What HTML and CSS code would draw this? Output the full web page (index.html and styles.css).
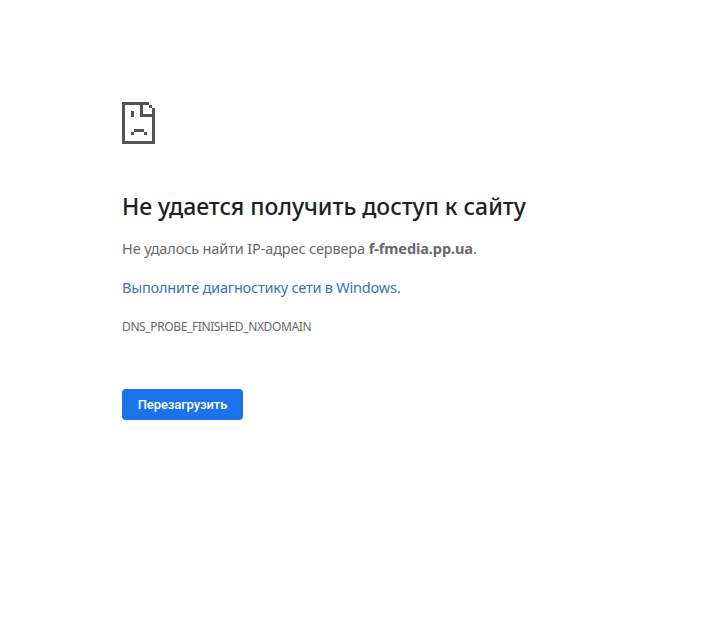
FILE: index.html
```html
<!DOCTYPE html>
<html lang="ru">
<head>
<meta charset="utf-8">
<title>f-fmedia.pp.ua</title>
<link rel="stylesheet" href="styles.css">
</head>
<body>
<main class="error-page">
<svg class="sad-icon" viewBox="0 0 33 42" shape-rendering="crispEdges" aria-hidden="true"><path fill="#535353" fill-rule="evenodd" d="M0 0H27V3H30V6H33V42H0ZM3 3V39H30V15H18V3ZM21 3V12H30V6H27V3ZM9 9H12V15H9ZM12 27H22V30H12ZM9 30H12V33H9ZM22 30H25V33H22Z"/></svg>
<h1 class="title">Не удается получить доступ к сайту</h1>
<p class="summary">Не удалось найти IP-адрес сервера <strong class="host">f-fmedia.pp.ua</strong>.</p>
<p class="suggestion"><a class="link">Выполните диагностику сети в Windows.</a></p>
<p class="code">DNS_PROBE_FINISHED_NXDOMAIN</p>
<button class="reload" type="button">Перезагрузить</button>
</main>
</body>
</html>
```
FILE: styles.css
```css
body { margin: 0; background: #fff; color: #696969; font-family: "Noto Sans", "Open Sans", sans-serif; }
.error-page { display: flex; flex-direction: column; align-items: flex-start; padding: 102px 0 0 122px; white-space: nowrap; }
.sad-icon { width: 33px; height: 42px; }
.title { margin: 47px 0 0; font-size: 23px; line-height: 30px; font-weight: 500; color: #202124; letter-spacing: -0.03px; }
.summary, .suggestion { margin: 16px 0 0; font-size: 14.5px; line-height: 23px; }
.summary { letter-spacing: -0.13px; }
.host { letter-spacing: -0.08px; }
.suggestion { letter-spacing: -0.21px; }
.link { color: #3474b9; }
.code { margin: 20px 0 0; font-size: 12px; line-height: 16px; letter-spacing: -0.38px; }
.reload { margin: 54px 0 0; width: 121px; height: 31px; padding: 0; border: 0; border-radius: 4px; background: #1a73e8; color: #fff; font: 500 13px Roboto, sans-serif; letter-spacing: -0.1px; }
```
